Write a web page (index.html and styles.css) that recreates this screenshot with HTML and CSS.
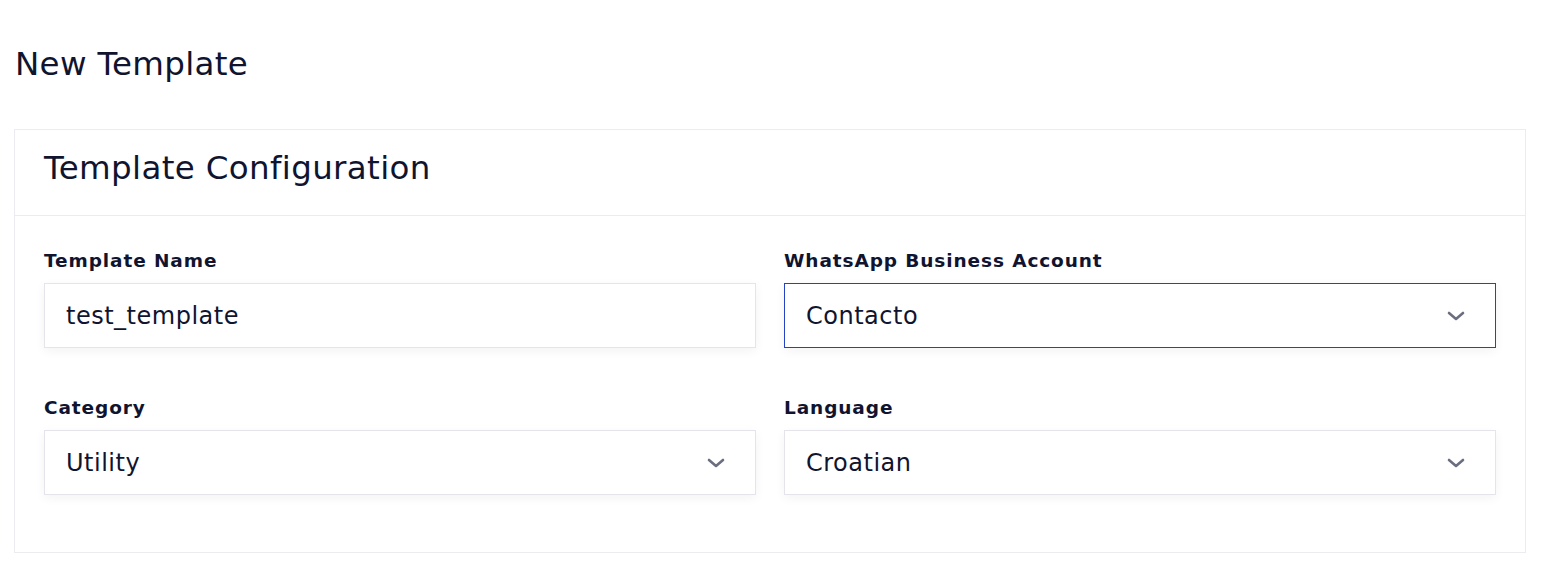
FILE: index.html
```html
<!DOCTYPE html>
<html lang="en">
<head>
<meta charset="utf-8">
<title>New Template</title>
<link rel="stylesheet" href="styles.css">
</head>
<body>
<main class="page">
  <h1 class="page-title">New Template</h1>
  <section class="card">
    <header class="card-header">
      <h2 class="card-title">Template Configuration</h2>
    </header>
    <div class="card-body">
      <div class="field">
        <label class="field-label">Template Name</label>
        <div class="control">test_template</div>
      </div>
      <div class="field">
        <label class="field-label">WhatsApp Business Account</label>
        <div class="control select focused">
          <span>Contacto</span>
          <svg class="chev" width="18" height="10" viewBox="0 0 18 10"><path d="M2 2l7 6 7-6" fill="none" stroke="#6b6e80" stroke-width="2.6" stroke-linecap="round" stroke-linejoin="round"/></svg>
        </div>
      </div>
      <div class="field">
        <label class="field-label">Category</label>
        <div class="control select">
          <span>Utility</span>
          <svg class="chev" width="18" height="10" viewBox="0 0 18 10"><path d="M2 2l7 6 7-6" fill="none" stroke="#6b6e80" stroke-width="2.6" stroke-linecap="round" stroke-linejoin="round"/></svg>
        </div>
      </div>
      <div class="field">
        <label class="field-label">Language</label>
        <div class="control select">
          <span>Croatian</span>
          <svg class="chev" width="18" height="10" viewBox="0 0 18 10"><path d="M2 2l7 6 7-6" fill="none" stroke="#6b6e80" stroke-width="2.6" stroke-linecap="round" stroke-linejoin="round"/></svg>
        </div>
      </div>
    </div>
  </section>
</main>
</body>
</html>
```
FILE: styles.css
```css
* { box-sizing: border-box; }
body {
  margin: 0;
  background: #ffffff;
  color: #10142f;
  font-family: "DejaVu Sans", "Inter", sans-serif;
}
.page {
  padding: 40px 24px 0 14px;
}
.page-title {
  margin: 0 0 0 1px;
  font-size: 32.5px;
  font-weight: 400;
  line-height: 48px;
  letter-spacing: 0.3px;
}
.card {
  margin-top: 41px;
  border: 1px solid #ececf0;
  width: 1512px;
}
.card-header {
  height: 86px;
  border-bottom: 1px solid #ececf0;
  padding: 0 29px 10px;
  display: flex;
  align-items: center;
}
.card-title {
  margin: 0;
  font-size: 32.5px;
  font-weight: 400;
  letter-spacing: 0.35px;
}
.card-body {
  display: grid;
  grid-template-columns: 1fr 1fr;
  column-gap: 28px;
  row-gap: 48px;
  padding: 33px 29px 57px;
}
.field-label {
  display: block;
  font-size: 18.5px;
  font-weight: 700;
  line-height: 24px;
  letter-spacing: 0.9px;
  margin-bottom: 10px;
}
.control {
  height: 65px;
  border: 1px solid #e4e4ea;
  background: #fff;
  box-shadow: 0 3px 10px rgba(20, 20, 50, 0.05);
  display: flex;
  align-items: center;
  padding: 0 22px 0 21px;
  font-size: 24px;
  letter-spacing: 0.5px;
}
.select {
  justify-content: space-between;
  padding-right: 30px;
}
.focused {
  border-color: #2342c5;
}
.chev { display: block; }
```
